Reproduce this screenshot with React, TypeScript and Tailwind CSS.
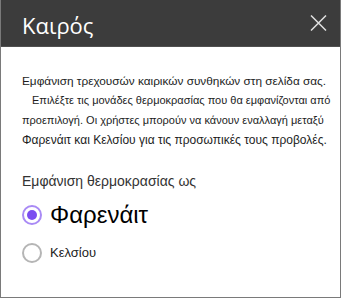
import { useState } from 'react';

const units = ['Φαρενάιτ', 'Κελσίου'];

export default function App() {
  const [unit, setUnit] = useState('Φαρενάιτ');

  return (
    <div className="w-[341px] h-[298px] bg-white border border-t-0 border-[#7a7a7a] flex flex-col font-['Liberation_Sans',sans-serif]">
      {/* Header */}
      <div className="h-[47px] bg-[#3c3c3c] border-b border-[#505050] flex items-center justify-between pl-[21px] pr-[12px]">
        <h1 className="text-white text-[22px] font-['Open_Sans',sans-serif] leading-none pt-[4px]">Καιρός</h1>
        <button className="w-[20px] h-[20px] flex items-center justify-center text-[#e0e0e0]" aria-label="Κλείσιμο">
          <svg width="17" height="16" viewBox="0 0 17 16" fill="none" stroke="currentColor" strokeWidth="1.5">
            <path d="M1 0.5 L16 15.5 M16 0.5 L1 15.5" />
          </svg>
        </button>
      </div>

      {/* Description */}
      <div className="pl-[21px] pt-[25px] text-[#221d1d] text-[11px] leading-[19px] whitespace-nowrap">
        <div className="text-[11.8px]">Εμφάνιση τρεχουσών καιρικών συνθηκών στη σελίδα σας.</div>
        <div className="pl-[10px]">Επιλέξτε τις μονάδες θερμοκρασίας που θα εμφανίζονται από</div>
        <div className="pt-[1px]">προεπιλογή. Οι χρήστες μπορούν να κάνουν εναλλαγή μεταξύ</div>
        <div className="pt-[1px] text-[12px]">Φαρενάιτ και Κελσίου για τις προσωπικές τους προβολές.</div>
      </div>

      {/* Temperature options */}
      <div className="pl-[21px] pt-[22px]">
        <div className="text-[14px] text-[#333] leading-[18px]">Εμφάνιση θερμοκρασίας ως</div>
        <div className="mt-[10px] flex flex-col gap-[13px]">
          {units.map((u, i) => {
            const selected = unit === u;
            return (
              <label key={u} className="flex items-center gap-[8px] cursor-pointer" onClick={() => setUnit(u)}>
                <span
                  className={`w-[20px] h-[20px] rounded-full border-2 flex items-center justify-center ${
                    selected ? 'border-[#a98af5]' : 'border-[#b5b5b5]'
                  }`}
                >
                  {selected && <span className="w-[10px] h-[10px] rounded-full bg-[#7b4cf0]" />}
                </span>
                <span className={i === 0 ? 'text-[24px] leading-[30px] text-black' : 'text-[13px] leading-[20px] text-[#222]'}>{u}</span>
              </label>
            );
          })}
        </div>
      </div>
    </div>
  );
}
